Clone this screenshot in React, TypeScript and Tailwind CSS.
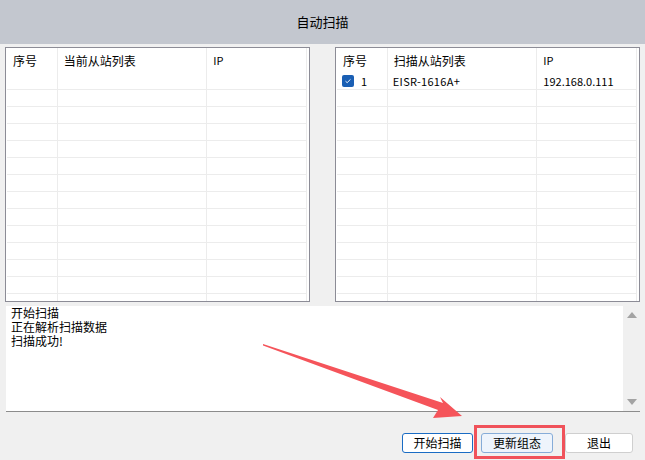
import React from 'react';

const leftCols = ['序号', '当前从站列表', 'IP'];
const rightCols = ['序号', '扫描从站列表', 'IP'];
const logLines = ['开始扫描', '正在解析扫描数据', '扫描成功!'];

type Row = { no?: string; name?: string; ip?: string; checked?: boolean };

function Table({ cols, rows }: { cols: string[]; rows: Row[] }) {
  const filled: Row[] = [...rows];
  while (filled.length < 14) filled.push({});

  return (
    <div className="h-[255px] overflow-hidden border border-[#8c8c96] bg-white pl-[1px] pr-[2px]">
      <div className="flex h-[25px] items-center text-[12px]">
        <div className="flex h-full w-[51px] items-center border-r border-[#ececec] pl-[6px]">{cols[0]}</div>
        <div className="flex h-full w-[150px] items-center border-r border-[#ececec] pl-[6px]">{cols[1]}</div>
        <div className="flex h-full w-[100px] items-center border-r border-[#ececec] pl-[6px] text-[11px]">{cols[2]}</div>
      </div>
      {filled.map((r, i) => (
        <div key={i} className="flex h-[17px] border-b border-[#ececec] text-[11px]">
          <div className="flex w-[51px] items-center gap-[7px] border-r border-[#ececec] pl-[5px]">
            {r.checked && (
              <span className="flex h-[12px] w-[12px] items-center justify-center rounded-[2px] bg-[#1a5fb4]">
                <svg viewBox="0 0 12 12" className="h-[10px] w-[10px]">
                  <path d="M3 6.2 L5 8 L9 4" fill="none" stroke="white" strokeWidth="1.1" />
                </svg>
              </span>
            )}
            {r.no}
          </div>
          <div className="flex w-[150px] items-center border-r border-[#ececec] pl-[5px] tracking-[0.3px]">{r.name}</div>
          <div className="flex w-[100px] items-center border-r border-[#ececec] pl-[6px]">{r.ip}</div>
        </div>
      ))}
    </div>
  );
}

export default function App() {
  return (
    <div
      className="relative h-[460px] w-[645px] overflow-hidden bg-[#f0f0f0] text-black"
      style={{ fontFamily: '"Noto Sans CJK SC", "Liberation Sans", sans-serif' }}
    >
      {/* Title bar */}
      <div className="flex h-[44px] items-center justify-center bg-[#c3c7cf] text-[13px]">自动扫描</div>

      {/* Tables */}
      <div className="mt-[3px] flex justify-between pl-[5px] pr-[5px]">
        <div className="w-[305px]">
          <Table cols={leftCols} rows={[]} />
        </div>
        <div className="w-[305px]">
          <Table cols={rightCols} rows={[{ no: '1', name: 'EISR-1616A+', ip: '192.168.0.111', checked: true }]} />
        </div>
      </div>

      {/* Log box */}
      <div className="ml-[6px] mr-[5px] mt-[4px] flex h-[106px] border-b border-[#8c8c8c] bg-white">
        <div className="flex-1 pl-[5px] text-[12px] leading-[14px]">
          {logLines.map((l) => (
            <div key={l}>{l}</div>
          ))}
        </div>
        <div className="flex w-[17px] flex-col items-center justify-between bg-[#f0f0f0] py-[6px]">
          <svg viewBox="0 0 10 6" className="h-[6px] w-[10px]">
            <path d="M0 6 L5 0 L10 6 Z" fill="#a3a3a3" />
          </svg>
          <svg viewBox="0 0 10 6" className="h-[6px] w-[10px]">
            <path d="M0 0 L5 6 L10 0 Z" fill="#a3a3a3" />
          </svg>
        </div>
      </div>

      {/* Buttons */}
      <div className="mt-[21px] flex justify-end gap-[8px] pr-[12px] text-[12px]">
        <button className="h-[20px] w-[71px] rounded-[3px] border border-[#1a6cc4] bg-white">开始扫描</button>
        <button className="h-[20px] w-[72px] rounded-[3px] border border-[#86acd8] bg-[#eef4fc]">更新组态</button>
        <button className="ml-[4px] h-[20px] w-[68px] rounded-[3px] border border-[#cfcfcf] bg-white">退出</button>
      </div>

      {/* Annotation: red highlight box */}
      <div className="pointer-events-none absolute left-[474px] top-[425px] h-[34px] w-[91px] border-[3px] border-[#f0525a]" />

      {/* Annotation: red arrow */}
      <svg className="pointer-events-none absolute left-0 top-0" width="645" height="460" viewBox="0 0 645 460">
        <path d="M263 344 L443 403 L440 397 L462 416 L433 418 L438 410 L263 345.5 Z" fill="#f5545a" />
      </svg>
    </div>
  );
}
